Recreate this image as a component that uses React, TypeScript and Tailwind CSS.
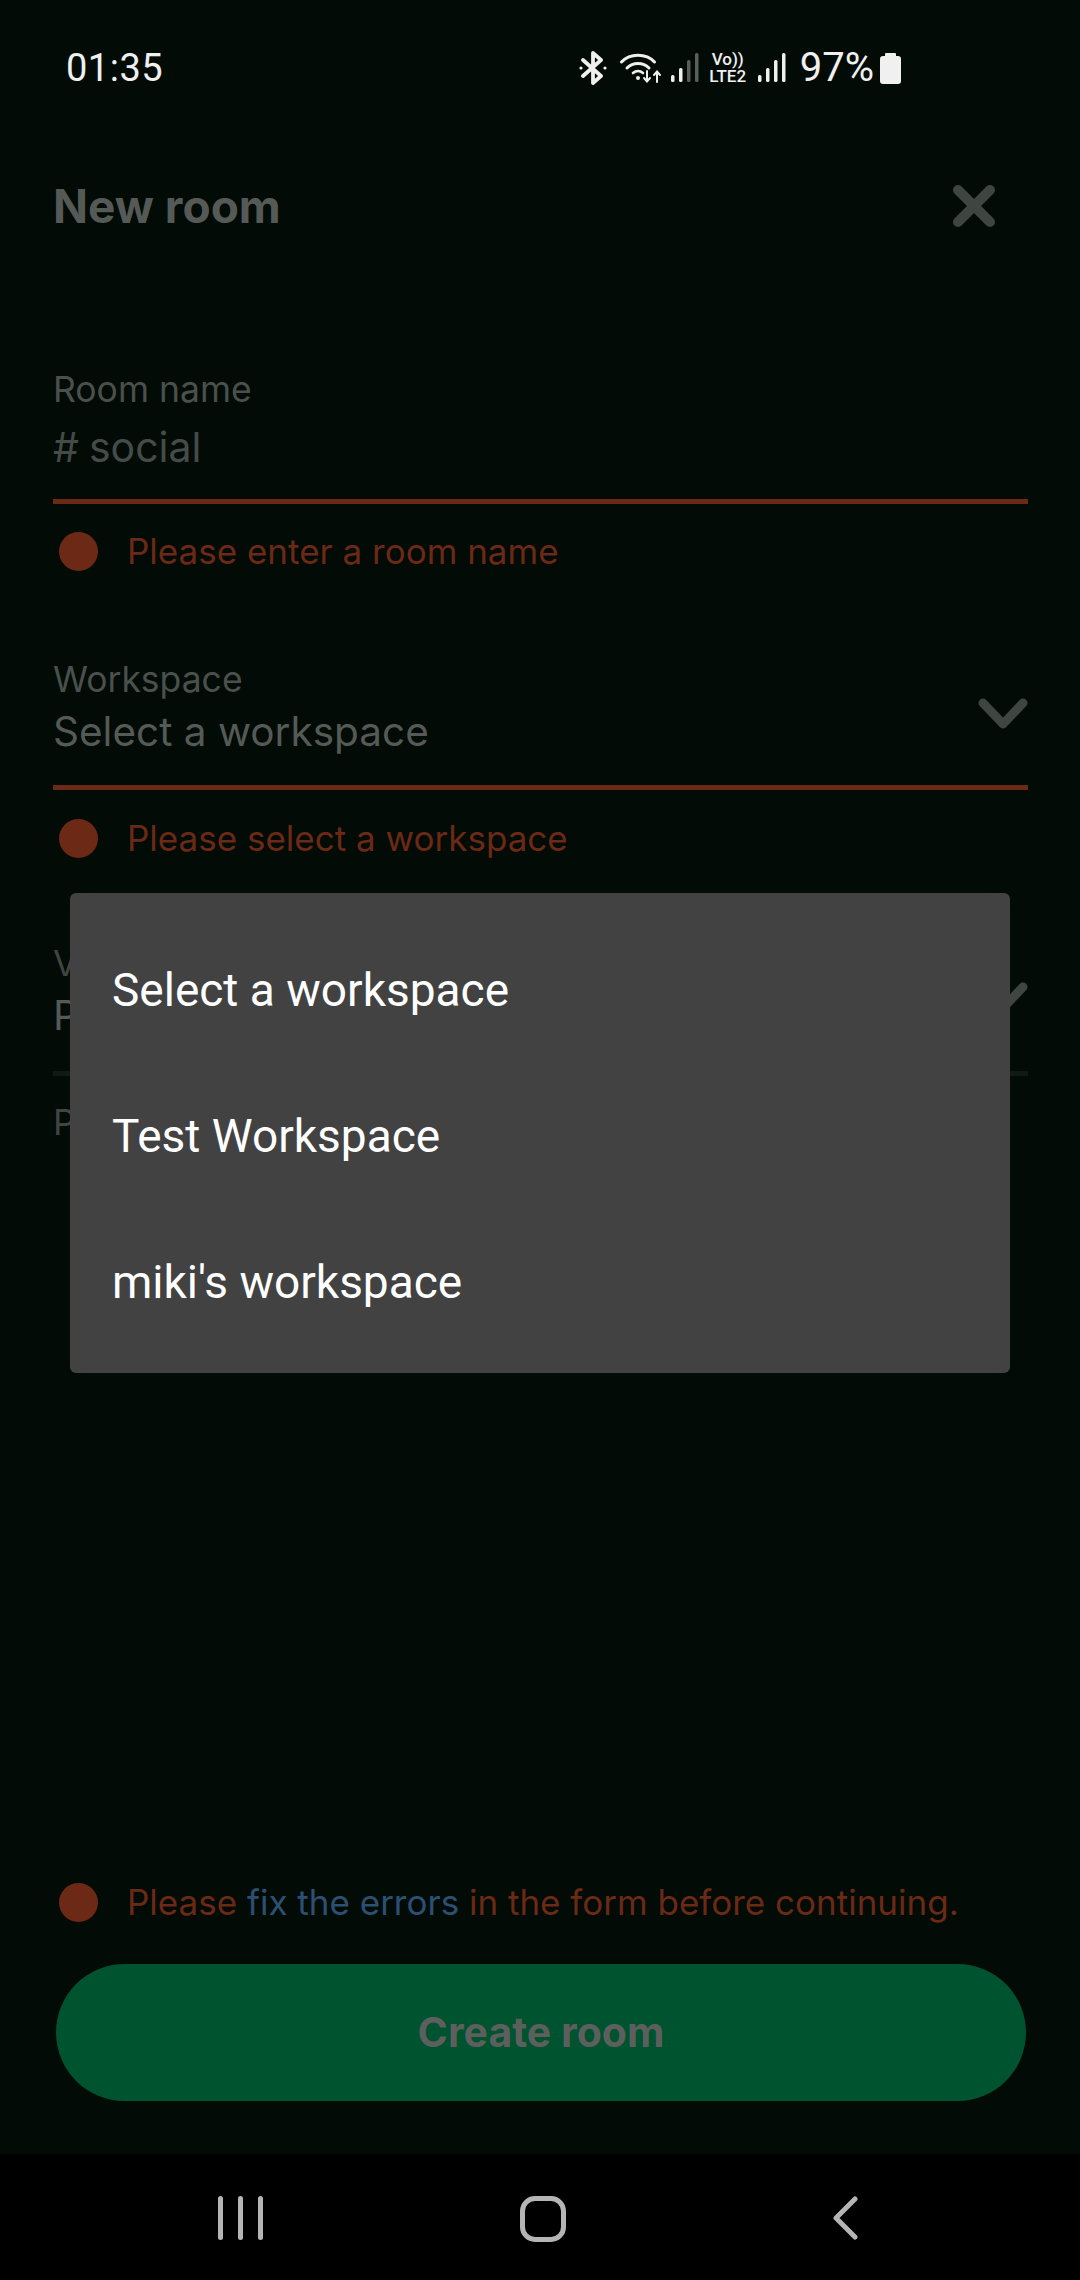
import React from 'react';

const FONT = "font-['Inter','Liberation_Sans',sans-serif]";

const WifiIcon = () => (
  <svg width="42" height="32" viewBox="0 0 42 32" fill="none" stroke="#f0f0f0" strokeLinecap="round">
    <path d="M1.5 10 C10 1 26 1 34.5 10" strokeWidth="3" />
    <path d="M7 16 C13 10 23 10 29 16" strokeWidth="3" />
    <path d="M13 21 C16 18.5 20 18.5 23 21" strokeWidth="2.6" />
    <circle cx="18" cy="26" r="2" fill="#f0f0f0" stroke="none" />
    <path d="M27 19 V29 M24 26 L27 29.5 L30 26" strokeWidth="2" />
    <path d="M37 30 V20 M34 23 L37 19.5 L40 23" strokeWidth="2" />
  </svg>
);

const SignalIcon = ({ dimLast }: { dimLast?: boolean }) => (
  <svg width="28" height="30" viewBox="0 0 28 30">
    <rect x="0" y="22" width="3.5" height="7" rx="1.5" fill="#f0f0f0" />
    <rect x="8" y="15" width="3.5" height="14" rx="1.5" fill="#f0f0f0" />
    <rect x="16" y="7" width="3.5" height="22" rx="1.5" fill={dimLast ? '#5a5f5c' : '#f0f0f0'} />
    <rect x="24" y="0" width="3.5" height="29" rx="1.5" fill={dimLast ? '#5a5f5c' : '#f0f0f0'} />
  </svg>
);

const StatusBar = () => (
  <div className="h-[124px] flex items-center pl-[66px] pr-[179px] pt-[12px] font-['Roboto',sans-serif] text-[#f0f0f0] shrink-0">
    <span className="text-[38px] leading-none tracking-[0.5px]">01:35</span>
    <div className="ml-auto flex items-center">
      <svg width="28" height="34" viewBox="0 0 28 34" fill="none" stroke="#f0f0f0" strokeWidth="3.8" strokeLinejoin="round" strokeLinecap="round">
        <path d="M4 9 L22 25 L14 32 V2 L22 9 L4 25" />
        <circle cx="2" cy="17" r="1.6" fill="#f0f0f0" stroke="none" />
        <circle cx="26" cy="17" r="1.6" fill="#f0f0f0" stroke="none" />
      </svg>
      <div className="ml-[13px]"><WifiIcon /></div>
      <div className="ml-[9px]"><SignalIcon dimLast /></div>
      <div className="ml-[8px] w-[42px] flex flex-col items-center text-[17px] leading-[17px] font-medium">
        <span>Vo))</span>
        <span>LTE2</span>
      </div>
      <div className="ml-[9px]"><SignalIcon /></div>
      <span className="ml-[14px] text-[40px] leading-none">97%</span>
      <div className="ml-[6px] w-[21px] flex flex-col items-center">
        <div className="w-[11px] h-[3px] bg-[#f0f0f0] rounded-t-[1px]" />
        <div className="w-[21px] h-[28px] bg-[#f0f0f0] rounded-[3px]" />
      </div>
    </div>
  </div>
);

const ErrorRow = ({ children }: { children: React.ReactNode }) => (
  <div className="flex items-center h-[39px]">
    <div className="ml-[6px] w-[39px] h-[39px] rounded-full bg-[#6b2916] shrink-0" />
    <span className="ml-[29px] text-[35px] leading-none text-[#6b2916] whitespace-nowrap">{children}</span>
  </div>
);

const Chevron = () => (
  <svg className="mt-[12px]" width="50" height="32" viewBox="0 0 50 32" fill="none" stroke="#3f4541" strokeWidth="9" strokeLinecap="round" strokeLinejoin="round">
    <path d="M5 5 L25 26 L45 5" />
  </svg>
);

const NavBar = () => (
  <div className="h-[126px] bg-black flex items-start shrink-0 pt-[42px] pl-[218px]">
    <div className="flex gap-[15px] w-[45px]">
      <div className="w-[5px] h-[44px] rounded-full bg-[#b5b5b5] shrink-0" />
      <div className="w-[5px] h-[44px] rounded-full bg-[#b5b5b5] shrink-0" />
      <div className="w-[5px] h-[44px] rounded-full bg-[#b5b5b5] shrink-0" />
    </div>
    <div className="ml-[257px] w-[46px] h-[46px] border-[5px] border-[#b5b5b5] rounded-[15px]" />
    <svg className="ml-[266px]" width="26" height="44" viewBox="0 0 26 44" fill="none" stroke="#b5b5b5" strokeWidth="5" strokeLinecap="round" strokeLinejoin="round">
      <path d="M23 3 L4 22 L23 41" />
    </svg>
  </div>
);

export default function App() {
  return (
    <div className={`relative w-[1080px] h-[2280px] bg-[#020b05] flex flex-col overflow-hidden ${FONT}`}>
      <StatusBar />

      <div className="flex-1 flex flex-col pl-[53px] pr-[52px] min-h-0">
        {/* Header */}
        <div className="flex items-center justify-between h-[66px] mt-[49px] pr-[32px]">
          <span className="text-[46px] font-bold text-[#555a57] leading-none">New room</span>
          <svg width="44" height="44" viewBox="0 0 44 44" fill="none" stroke="#3f4541" strokeWidth="10" strokeLinecap="round">
            <path d="M6 6 L38 38 M38 6 L6 38" />
          </svg>
        </div>

        {/* Room name */}
        <div className="mt-[131px] text-[35.5px] leading-[40px] text-[#4a504c]">Room name</div>
        <div className="mt-[13px] text-[41px] leading-[48px] text-[#454b48] flex gap-[10px]">
          <span>#</span>
          <span>social</span>
        </div>
        <div className="mt-[28px] h-[5px] bg-[#6b2916]" />
        <div className="mt-[28px]"><ErrorRow>Please enter a room name</ErrorRow></div>

        {/* Workspace */}
        <div className="mt-[89px] flex items-center justify-between">
          <div>
            <div className="text-[35.5px] leading-[40px] text-[#4a504c]">Workspace</div>
            <div className="text-[40.5px] leading-[48px] text-[#555a57] mt-[8px]">Select a workspace</div>
          </div>
          <Chevron />
        </div>
        <div className="mt-[29px] h-[5px] bg-[#6b2916]" />
        <div className="mt-[29px]"><ErrorRow>Please select a workspace</ErrorRow></div>

        {/* Visibility, mostly hidden by the picker */}
        <div className="mt-[86px] flex items-center justify-between">
          <div>
            <div className="text-[35.5px] leading-[40px] text-[#3f4541]">Visibility</div>
            <div className="text-[40.5px] leading-[48px] text-[#555a57] mt-[8px]">Public</div>
          </div>
          <Chevron />
        </div>
        <div className="mt-[31px] h-[5px] bg-[#101a15]" />
        <div className="mt-[27px] text-[35.5px] leading-[40px] text-[#3f4541]">Purpose</div>

        {/* Footer */}
        <div className="mt-auto">
          <ErrorRow>
            Please <span className="text-[#2b5073]">fix the errors</span> in the form before continuing.
          </ErrorRow>
          <button className="mt-[42px] ml-[3px] w-[970px] h-[137px] rounded-full bg-[#00532f] flex items-center justify-center text-[41px] font-bold text-[#5c5f5d]">
            Create room
          </button>
          <div className="h-[53px]" />
        </div>
      </div>

      <NavBar />

      {/* Workspace picker */}
      <div className="absolute left-[70px] top-[893px] w-[940px] h-[480px] bg-[#424242] rounded-[6px] pt-[24px] font-['Roboto',sans-serif] text-white text-[46px] shadow-[0_0_30px_rgba(255,255,255,0.02)]">
        <div className="h-[146px] flex items-center px-[42px]">Select a workspace</div>
        <div className="h-[146px] flex items-center px-[42px]">Test Workspace</div>
        <div className="h-[146px] flex items-center px-[42px]">miki's workspace</div>
      </div>
    </div>
  );
}
